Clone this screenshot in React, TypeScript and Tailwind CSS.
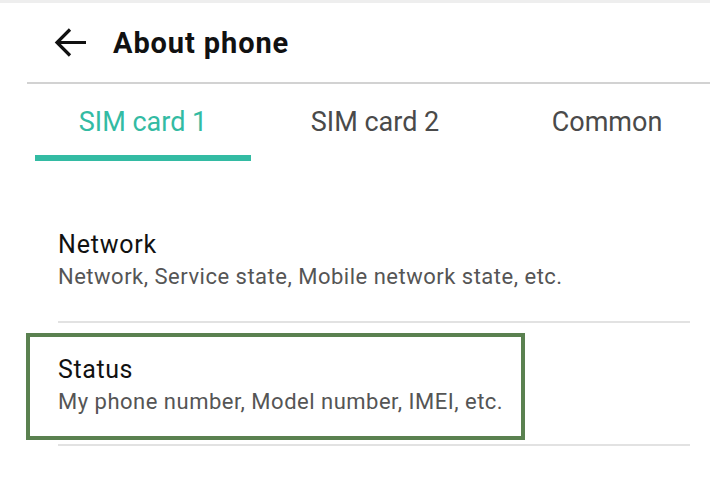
import React from "react";

export default function App() {
  const font = { fontFamily: "Roboto, 'Noto Sans', Arial, sans-serif" };
  return (
    <div className="w-[710px] h-[504px] bg-white overflow-hidden" style={font}>
      <div className="h-[3px] bg-[#eeeeee]" />
      <div className="h-[79px] flex items-center pl-[54px]">
        <svg width="33" height="31" viewBox="0 0 33 31" className="shrink-0">
          <path d="M32 15.5H3.5M16 2.5L3 15.5L16 28.5" fill="none" stroke="#111" strokeWidth="3.2" strokeLinecap="butt" strokeLinejoin="miter" />
        </svg>
        <div className="ml-[26px] text-[29px] leading-[32px] tracking-[0.9px] font-bold text-[#111] mt-[1px]">About phone</div>
      </div>
      <div className="ml-[27px] h-[2px] bg-[#d2d2d2]" />
      <div className="pl-[35px] flex gap-[16px]">
        <div className="w-[216px] shrink-0 flex flex-col">
          <div className="h-[71px] pt-[6px] flex items-center justify-center text-[27px] text-[#33bba3]">SIM card 1</div>
          <div className="h-[6px] bg-[#33bba3]" />
        </div>
        <div className="w-[216px] shrink-0 h-[71px] pt-[6px] flex items-center justify-center text-[27px] text-[#4a4a4a]">SIM card 2</div>
        <div className="w-[216px] shrink-0 h-[71px] pt-[6px] flex items-center justify-center text-[27px] text-[#4a4a4a]">Common</div>
      </div>
      <div className="pt-[70px] pl-[58px] pr-[20px]">
        <div className="text-[25px] leading-[28px] tracking-[0.8px] text-[#111]">Network</div>
        <div className="mt-[5px] text-[22px] leading-[26px] tracking-[0.5px] text-[#555] whitespace-nowrap">Network, Service state, Mobile network state, etc.</div>
      </div>
      <div className="mt-[31px] ml-[58px] mr-[20px] h-[2px] bg-[#e2e2e2]" />
      <div className="mt-[10px] ml-[26px] w-[499px] border-[4px] border-[#5a8150] pl-[28px] pt-[19px] pb-[21px]">
        <div className="text-[25px] leading-[28px] tracking-[0.6px] text-[#111]">Status</div>
        <div className="mt-[5px] text-[22px] leading-[26px] tracking-[0.5px] text-[#555] whitespace-nowrap">My phone number, Model number, IMEI, etc.</div>
      </div>
      <div className="mt-[4px] ml-[58px] mr-[20px] h-[2px] bg-[#e2e2e2]" />
    </div>
  );
}
